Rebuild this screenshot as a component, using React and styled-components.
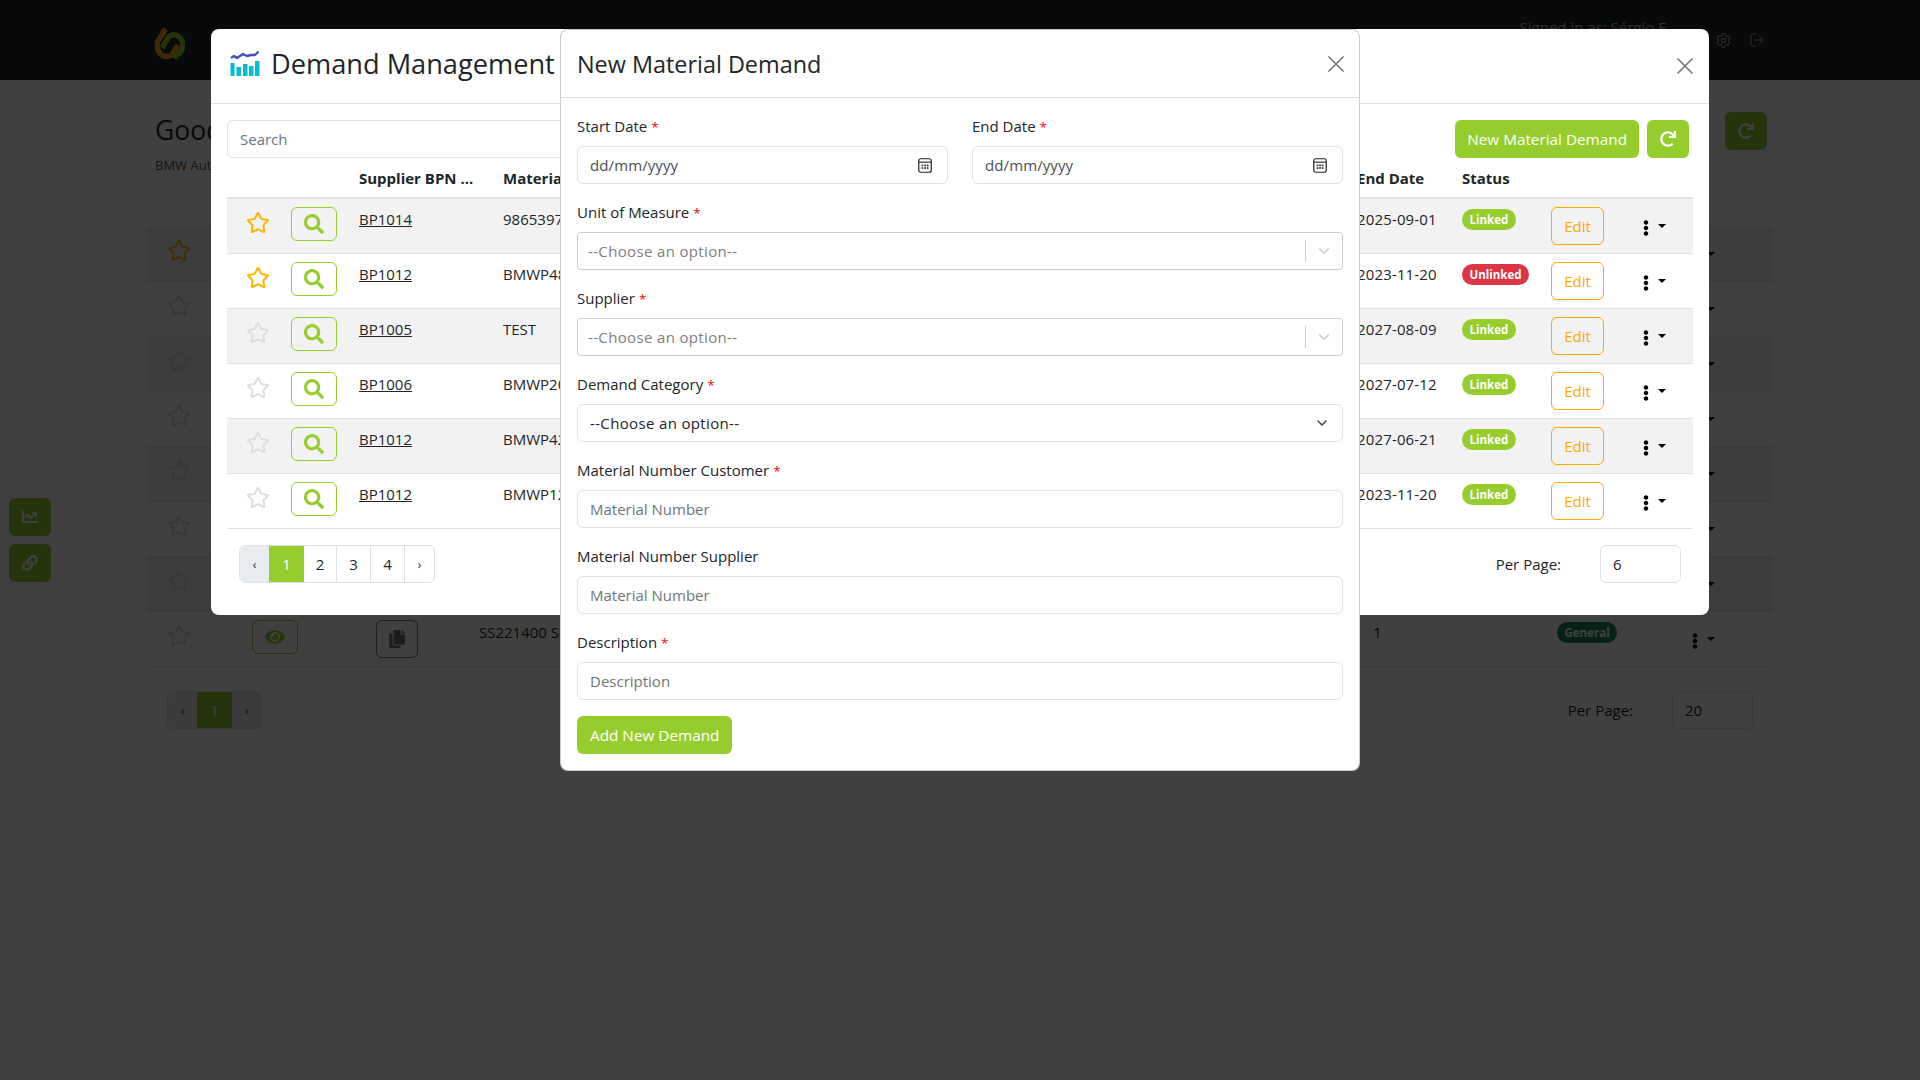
import React from "react";
import styled, { createGlobalStyle } from "styled-components";
import { FaSearch, FaRedo, FaEllipsisV, FaEye, FaCopy, FaChartLine, FaLink } from "react-icons/fa";
import { Star, Settings, LogOut, ChevronDown } from "lucide-react";

const FONT = `"Open Sans", "Noto Sans", "Liberation Sans", sans-serif`;
const GREEN = "#96cd2c";

const Global = createGlobalStyle`
  * { box-sizing: border-box; }
  html, body { margin: 0; padding: 0; height: 100%; background: #fff; }
  body { font-family: ${FONT}; font-size: 15px; color: #212529; overflow: hidden; }
  #root { width: 1920px; height: 1080px; }
`;

const Page = styled.div`
  position: relative;
  width: 1920px;
  height: 1080px;
  overflow: hidden;
`;
const TopBar = styled.header`
  height: 80px;
  background: #212529;
  display: flex;
  align-items: flex-start;
  padding: 26px 155px 0 155px;
`;
const LogoSvg = styled.svg`
  width: 30px;
  height: 36px;
  flex: none;
`;
const TopRight = styled.div`
  margin-left: auto;
  display: flex;
  align-items: flex-start;
  color: #bbb;
`;
const SignedIn = styled.span`
  margin-top: -11px;
  margin-right: 49px;
  line-height: 24px;
`;
const TopIcon = styled.span`
  display: flex;
  margin-top: 6px;
  margin-right: ${(p) => p.$gap}px;
`;
const Main = styled.main`
  width: 1626px;
  margin-left: 147px;
`;
const PageHead = styled.div`
  height: 147px;
  display: flex;
  justify-content: space-between;
  padding: 32px 6px 0 8px;
`;
const PageTitle = styled.h1`
  margin: 0;
  font-size: 26.5px;
  font-weight: 500;
  line-height: 36px;
`;
const PageSub = styled.p`
  margin: 7px 0 0;
  font-size: 13px;
  line-height: 20px;
  color: #555;
`;
const SquareBtn = styled.button`
  width: 42px;
  height: 38px;
  border: 0;
  border-radius: 6px;
  background: ${GREEN};
  color: #fff;
  display: flex;
  align-items: center;
  justify-content: center;
  padding: 0;
  font-size: 16px;
`;
const BgRow = styled.div`
  height: 55px;
  display: grid;
  grid-template-columns: 105px 124px 103px 894px 184px 130px 1fr;
  align-items: start;
  padding-top: 8px;
  background: ${(p) => (p.$striped ? "#f2f2f2" : "#fff")};
  border-bottom: 1px solid #dee2e6;
`;
const BgStar = styled.span`
  display: flex;
  padding: 4px 0 0 20px;
`;
const BgIconBtn = styled.span`
  width: ${(p) => p.$w}px;
  height: ${(p) => p.$h}px;
  border: 1px solid ${(p) => p.$c};
  color: ${(p) => p.$c};
  border-radius: 6px;
  display: flex;
  align-items: center;
  justify-content: center;
  font-size: ${(p) => p.$fs}px;
`;
const BgText = styled.span`
  line-height: 24px;
  white-space: nowrap;
`;
const Badge = styled.span`
  display: inline-block;
  height: 21px;
  line-height: 21px;
  margin-top: 2px;
  padding: 0 7.5px;
  border-radius: 11px;
  font-size: 11.5px;
  font-weight: 700;
  color: #fff;
  background: ${(p) => p.$c};
  justify-self: start;
`;
const Actions = styled.span`
  display: flex;
  align-items: center;
  color: #000;
  margin-top: 13px;
  font-size: 16px;
`;
const Caret = styled.i`
  display: block;
  width: 0;
  height: 0;
  margin: -4px 0 0 4px;
  border-top: 4px solid #000;
  border-left: 4px solid transparent;
  border-right: 4px solid transparent;
`;
const PagerRow = styled.div`
  display: flex;
  justify-content: space-between;
  align-items: center;
  padding: ${(p) => p.$pad};
`;
const Pager = styled.div`
  display: flex;
  height: 38px;
  border: 1px solid #dee2e6;
  border-radius: 6px;
  overflow: hidden;
`;
const PageCell = styled.span`
  width: ${(p) => p.$w}px;
  display: flex;
  align-items: center;
  justify-content: center;
  font-size: ${(p) => (p.$small ? 12 : 15)}px;
  color: ${(p) => (p.$active ? "#fff" : "#212529")};
  background: ${(p) => (p.$active ? GREEN : p.$off ? "#e9ecef" : "#fff")};
  border-right: ${(p) => (p.$last || p.$active || p.$off ? 0 : "1px solid #dee2e6")};
`;
const PerPage = styled.div`
  display: flex;
  align-items: center;
  gap: ${(p) => p.$gap}px;
`;
const PerInput = styled.input`
  width: 81px;
  height: 38px;
  border: 1px solid #dee2e6;
  border-radius: 6px;
  padding: 0 12px;
  font: inherit;
  color: #212529;
  background: #fff;
`;
const Floating = styled.div`
  position: absolute;
  left: 9px;
  top: 498px;
  display: flex;
  flex-direction: column;
  gap: 8px;
`;
const Backdrop = styled.div`
  position: absolute;
  inset: 0;
  background: rgba(0, 0, 0, 0.75);
`;

const ListModal = styled.section`
  position: absolute;
  left: 211px;
  top: 29px;
  width: 1498px;
  height: 586px;
  background: #fff;
  border-radius: 8px;
`;
const ListHeader = styled.div`
  height: 75px;
  border-bottom: 1px solid #dee2e6;
  display: flex;
  align-items: center;
  padding: 0 16px 0 19px;
`;
const ListTitle = styled.h3`
  margin: 0 0 4px 11px;
  font-size: 27.2px;
  font-weight: 500;
  line-height: 40px;
  white-space: nowrap;
`;
const CloseBtn = styled.span`
  margin-left: auto;
  display: flex;
`;
const ListBody = styled.div`
  padding: 16px;
`;
const Toolbar = styled.div`
  display: flex;
  align-items: center;
  padding-right: 4px;
  gap: 8px;
`;
const Field = styled.input`
  display: block;
  width: ${(p) => p.$w || "100%"};
  height: 38px;
  border: 1px solid #dee2e6;
  border-radius: 6px;
  padding: 0 12px;
  font: inherit;
  color: #212529;
  background: #fff;
  &::placeholder { color: #6c757d; opacity: 1; }
`;
const PrimaryBtn = styled.button`
  height: 38px;
  border: 0;
  border-radius: 6px;
  background: ${GREEN};
  color: #fff;
  font-family: inherit;
  font-size: 15.3px;
  padding: 0 ${(p) => p.$px}px;
  white-space: nowrap;
`;
const Spacer = styled.div`
  flex: 1;
`;
const gridCols = "64px 68px 144px 854px 105px 89px 87px 1fr";
const TableHead = styled.div`
  display: grid;
  grid-template-columns: ${gridCols};
  height: 41px;
  align-items: center;
  padding-top: 1px;
  font-weight: 700;
  border-bottom: 2px solid #dee2e6;
  white-space: nowrap;
`;
const Row = styled.div`
  display: grid;
  grid-template-columns: ${gridCols};
  height: 55px;
  align-items: start;
  padding-top: 8px;
  background: ${(p) => (p.$striped ? "#f2f2f2" : "#fff")};
  border-bottom: 1px solid #dee2e6;
`;
const StarCell = styled.span`
  display: flex;
  padding: 4px 0 0 19px;
`;
const OutlineBtn = styled.span`
  width: ${(p) => p.$w}px;
  height: ${(p) => p.$h}px;
  border: 1px solid ${(p) => p.$c};
  border-radius: 6px;
  color: ${(p) => p.$c};
  display: flex;
  align-items: center;
  justify-content: center;
  font-size: ${(p) => p.$fs || 15}px;
`;
const Bpn = styled.a`
  color: #212529;
  text-decoration: underline;
  line-height: 24px;
  justify-self: start;
`;
const Cell = styled.span`
  line-height: 24px;
  white-space: nowrap;
  letter-spacing: ${(p) => p.$ls || 0}px;
`;
const ChartSvg = styled.svg`
  width: 30px;
  height: 26px;
  flex: none;
  margin-bottom: 7px;
`;

const FormModal = styled.section`
  position: absolute;
  left: 560px;
  top: 29px;
  width: 800px;
  height: 742px;
  background: #fff;
  border: 1px solid rgba(0, 0, 0, 0.2);
  border-radius: 8px;
`;
const FormHeader = styled.div`
  height: 68px;
  border-bottom: 1px solid #dee2e6;
  display: flex;
  align-items: center;
  padding: 0 15px 0 16px;
`;
const FormTitle = styled.h5`
  margin: 0;
  font-size: 23.4px;
  font-weight: 500;
  line-height: 36px;
`;
const FormBody = styled.form`
  padding: 16px;
`;
const TwoCols = styled.div`
  display: grid;
  grid-template-columns: 371px 371px;
  gap: 24px;
`;
const Group = styled.div`
  margin-bottom: 16px;
`;
const Label = styled.label`
  display: block;
  height: 24px;
  line-height: 24px;
  margin-bottom: 8px;
  color: #212529;
`;
const Req = styled.span`
  color: #f00;
  margin-left: 4px;
  font-size: 13.5px;
  line-height: 0;
`;
const DateBox = styled.div`
  height: 38px;
  border: 1px solid #dee2e6;
  border-radius: 6px;
  display: flex;
  align-items: center;
  justify-content: space-between;
  padding: 0 15px 0 12px;
  color: #495057;
  letter-spacing: 0.1px;
`;
const ComboBox = styled.div`
  height: 38px;
  border: 1px solid #ccc;
  border-radius: 4px;
  display: flex;
  align-items: center;
  padding-left: 10px;
  color: #808080;
`;
const ComboText = styled.span`
  flex: 1;
  letter-spacing: 0.35px;
`;
const ComboSep = styled.span`
  width: 1px;
  height: 22px;
  background: #ccc;
`;
const ComboArrow = styled.span`
  width: 36px;
  display: flex;
  justify-content: center;
  color: #ccc;
`;
const NativeSelect = styled.div`
  height: 38px;
  border: 1px solid #dee2e6;
  border-radius: 6px;
  display: flex;
  align-items: center;
  justify-content: space-between;
  padding: 0 12px 0 12px;
  color: #212529;
  letter-spacing: 0.35px;
`;

const rows = [
  { bpn: "BP1014", mat: "98653971", end: "2025-09-01", on: true, status: "Linked" },
  { bpn: "BP1012", mat: "BMWP48", end: "2023-11-20", on: true, status: "Unlinked" },
  { bpn: "BP1005", mat: "TEST", end: "2027-08-09", on: false, status: "Linked" },
  { bpn: "BP1006", mat: "BMWP20", end: "2027-07-12", on: false, status: "Linked" },
  { bpn: "BP1012", mat: "BMWP42", end: "2027-06-21", on: false, status: "Linked" },
  { bpn: "BP1012", mat: "BMWP12", end: "2023-11-20", on: false, status: "Linked" },
];

const Logo = () => (
  <LogoSvg viewBox="10 6 30 36" fill="none" strokeWidth="5.5" strokeLinecap="butt" strokeLinejoin="round">
    <path d="M20.5 9 L13 21 Q11 25 13 30 Q16 37 23 36.5 L27 35 L33 25" stroke="#ffa51e" />
    <path d="M17 28 L23 18 Q26 14 31 15 Q37 17 37.5 24 Q38 31 34 33 L29 38" stroke="#96cd2c" />
  </LogoSvg>
);

const ChartIcon = () => (
  <ChartSvg viewBox="0 0 30 26">
    <path d="M1 8 L4 6 L7 8 L13 4 L17 6 L21 5 L25 5 L28.5 1.5" fill="none" stroke="#3f51b5" strokeWidth="2.4" strokeLinejoin="round" />
    <rect x="0.5" y="13" width="4" height="13" fill="#00bcd4" />
    <rect x="6.5" y="17" width="4.5" height="9" fill="#00bcd4" />
    <rect x="13" y="14" width="4.5" height="12" fill="#00bcd4" />
    <rect x="19" y="16" width="4.5" height="10" fill="#00bcd4" />
    <rect x="25" y="11" width="4.5" height="15" fill="#00bcd4" />
  </ChartSvg>
);

const CloseIcon = () => (
  <svg width="16" height="16" viewBox="0 0 16 16" fill="none" stroke="#7a7a7a" strokeWidth="1.7" strokeLinecap="round">
    <path d="M1 1 L15 15 M15 1 L1 15" />
  </svg>
);

const CalendarIcon = () => (
  <svg width="14" height="15" viewBox="0 0 14 15" fill="none">
    <rect x="0.75" y="0.75" width="12.5" height="13.5" rx="2" stroke="#222" strokeWidth="1.2" />
    <rect x="1" y="3.6" width="12" height="1.1" fill="#222" />
    <g fill="#333">
      <rect x="3.6" y="6.5" width="1.7" height="1.7" /><rect x="6.2" y="6.5" width="1.7" height="1.7" /><rect x="8.8" y="6.5" width="1.7" height="1.7" />
      <rect x="3.6" y="9.2" width="1.7" height="1.7" /><rect x="6.2" y="9.2" width="1.7" height="1.7" /><rect x="8.8" y="9.2" width="1.7" height="1.7" />
    </g>
  </svg>
);

const Combo = () => (
  <ComboBox>
    <ComboText>--Choose an option--</ComboText>
    <ComboSep />
    <ComboArrow><ChevronDown size={18} strokeWidth={2} /></ComboArrow>
  </ComboBox>
);

const Background = () => (
  <>
    <TopBar>
      <Logo />
      <TopRight>
        <SignedIn>Signed in as: Sérgio F</SignedIn>
        <TopIcon $gap={17}><Settings size={17} strokeWidth={1.5} /></TopIcon>
        <TopIcon $gap={0}><LogOut size={16} strokeWidth={1.5} /></TopIcon>
      </TopRight>
    </TopBar>
    <Main>
      <PageHead>
        <div>
          <PageTitle>Good morning</PageTitle>
          <PageSub>BMW Automotive</PageSub>
        </div>
        <SquareBtn><FaRedo /></SquareBtn>
      </PageHead>
      {[0, 1, 2, 3, 4, 5, 6, 7].map((i) => (
        <BgRow key={i} $striped={i % 2 === 0 && i < 7}>
          <BgStar><Star size={24} strokeWidth={2} color={i === 0 ? "#ffb400" : "#ddd"} /></BgStar>
          <BgIconBtn $w={46} $h={34} $c={GREEN} $fs={20}><FaEye /></BgIconBtn>
          <BgIconBtn $w={42} $h={38} $c="#6c757d" $fs={18}><FaCopy /></BgIconBtn>
          <BgText>SS221400 S</BgText>
          <BgText>1</BgText>
          <Badge $c="#198754">General</Badge>
          <Actions><FaEllipsisV /><Caret /></Actions>
        </BgRow>
      ))}
      <PagerRow $pad="24px 20px 0">
        <Pager>
          <PageCell $w={29} $off $small>‹</PageCell>
          <PageCell $w={35} $active>1</PageCell>
          <PageCell $w={29} $off $small $last>›</PageCell>
        </Pager>
        <PerPage $gap={39}>
          <span>Per Page:</span>
          <PerInput readOnly value="20" />
        </PerPage>
      </PagerRow>
    </Main>
    <Floating>
      <SquareBtn><FaChartLine /></SquareBtn>
      <SquareBtn><FaLink /></SquareBtn>
    </Floating>
    <Backdrop />
  </>
);

const DemandList = () => (
  <ListModal>
    <ListHeader>
      <ChartIcon />
      <ListTitle>Demand Management</ListTitle>
      <CloseBtn><CloseIcon /></CloseBtn>
    </ListHeader>
    <ListBody>
      <Toolbar>
        <Field $w="800px" placeholder="Search" />
        <Spacer />
        <PrimaryBtn $px={12}>New Material Demand</PrimaryBtn>
        <SquareBtn><FaRedo /></SquareBtn>
      </Toolbar>
      <TableHead>
        <span /><span />
        <span>Supplier BPN ...</span>
        <span>Material</span>
        <span>End Date</span>
        <span>Status</span>
      </TableHead>
      {rows.map((r, i) => (
        <Row key={i} $striped={i % 2 === 0}>
          <StarCell><Star size={24} strokeWidth={2} color={r.on ? "#ffb400" : "#ddd"} /></StarCell>
          <OutlineBtn $w={46} $h={34} $c={GREEN} $fs={20}><FaSearch /></OutlineBtn>
          <Bpn>{r.bpn}</Bpn>
          <Cell>{r.mat}</Cell>
          <Cell $ls={0.15}>{r.end}</Cell>
          <Badge $c={r.status === "Linked" ? GREEN : "#dc3545"}>{r.status}</Badge>
          <OutlineBtn $w={53} $h={38} $c="#ffa800">Edit</OutlineBtn>
          <Actions><FaEllipsisV /><Caret /></Actions>
        </Row>
      ))}
      <PagerRow $pad="16px 12px 0">
        <Pager>
          <PageCell $w={29} $off $small>‹</PageCell>
          <PageCell $w={35} $active>1</PageCell>
          <PageCell $w={33}>2</PageCell>
          <PageCell $w={34}>3</PageCell>
          <PageCell $w={34}>4</PageCell>
          <PageCell $w={29} $small $last>›</PageCell>
        </Pager>
        <PerPage $gap={39}>
          <span>Per Page:</span>
          <PerInput readOnly value="6" />
        </PerPage>
      </PagerRow>
    </ListBody>
  </ListModal>
);

const DemandForm = () => (
  <FormModal>
    <FormHeader>
      <FormTitle>New Material Demand</FormTitle>
      <CloseBtn><CloseIcon /></CloseBtn>
    </FormHeader>
    <FormBody>
      <TwoCols>
        <Group>
          <Label>Start Date<Req>*</Req></Label>
          <DateBox>dd/mm/yyyy<CalendarIcon /></DateBox>
        </Group>
        <Group>
          <Label>End Date<Req>*</Req></Label>
          <DateBox>dd/mm/yyyy<CalendarIcon /></DateBox>
        </Group>
      </TwoCols>
      <Group>
        <Label>Unit of Measure<Req>*</Req></Label>
        <Combo />
      </Group>
      <Group>
        <Label>Supplier<Req>*</Req></Label>
        <Combo />
      </Group>
      <Group>
        <Label>Demand Category<Req>*</Req></Label>
        <NativeSelect>--Choose an option--<ChevronDown size={16} strokeWidth={2} color="#343a40" /></NativeSelect>
      </Group>
      <Group>
        <Label>Material Number Customer<Req>*</Req></Label>
        <Field placeholder="Material Number" />
      </Group>
      <Group>
        <Label>Material Number Supplier</Label>
        <Field placeholder="Material Number" />
      </Group>
      <Group>
        <Label>Description<Req>*</Req></Label>
        <Field placeholder="Description" />
      </Group>
      <PrimaryBtn type="button" $px={13}>Add New Demand</PrimaryBtn>
    </FormBody>
  </FormModal>
);

export default function App() {
  return (
    <>
      <Global />
      <Page>
        <Background />
        <DemandList />
        <DemandForm />
      </Page>
    </>
  );
}
